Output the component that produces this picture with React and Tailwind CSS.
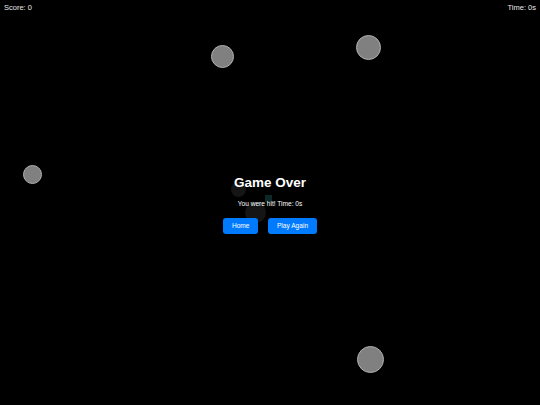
const balls = [
  { x: 211, y: 45, d: 23 },
  { x: 356, y: 35, d: 25 },
  { x: 23, y: 165, d: 19 },
  { x: 357, y: 346, d: 27 },
]

// dimmed things that sit under the game-over overlay
const hidden = [
  { x: 231, y: 182, d: 15 },
  { x: 245, y: 202, d: 21 },
]

export default function App() {
  return (
    <div className="relative w-[540px] h-[405px] overflow-hidden bg-black text-white font-['Liberation_Sans',Arial,sans-serif]">
      {balls.map((b, i) => (
        <div
          key={i}
          className="absolute rounded-full bg-[#808080] border border-[#b0b0b0]"
          style={{ left: b.x, top: b.y, width: b.d, height: b.d }}
        />
      ))}

      {hidden.map((b, i) => (
        <div
          key={i}
          className="absolute rounded-full bg-[#151515]"
          style={{ left: b.x, top: b.y, width: b.d, height: b.d }}
        />
      ))}
      <div className="absolute left-[265px] top-[195px] w-[7px] h-[7px] bg-[#0c2828]" />

      <div className="absolute inset-x-0 top-0 flex justify-between px-[4px] pt-[2px] text-[7.5px] leading-[11px] text-[#e8e8e8]">
        <span>Score: 0</span>
        <span>Time: 0s</span>
      </div>

      <div className="relative flex h-full flex-col items-center pt-[174px]">
        <h1 className="text-[13.5px] font-bold leading-[17px]">Game Over</h1>
        <p className="mt-[8px] text-[6.6px] leading-[9px]">You were hit! Time: 0s</p>
        <div className="mt-[10px] flex gap-[10px]">
          <button className="h-[16px] rounded-[3px] bg-[#007bff] px-[8.7px] text-[6.6px] leading-[16px] text-white">
            Home
          </button>
          <button className="h-[16px] rounded-[3px] bg-[#007bff] px-[8.7px] text-[6.6px] leading-[16px] text-white">
            Play Again
          </button>
        </div>
      </div>
    </div>
  )
}
